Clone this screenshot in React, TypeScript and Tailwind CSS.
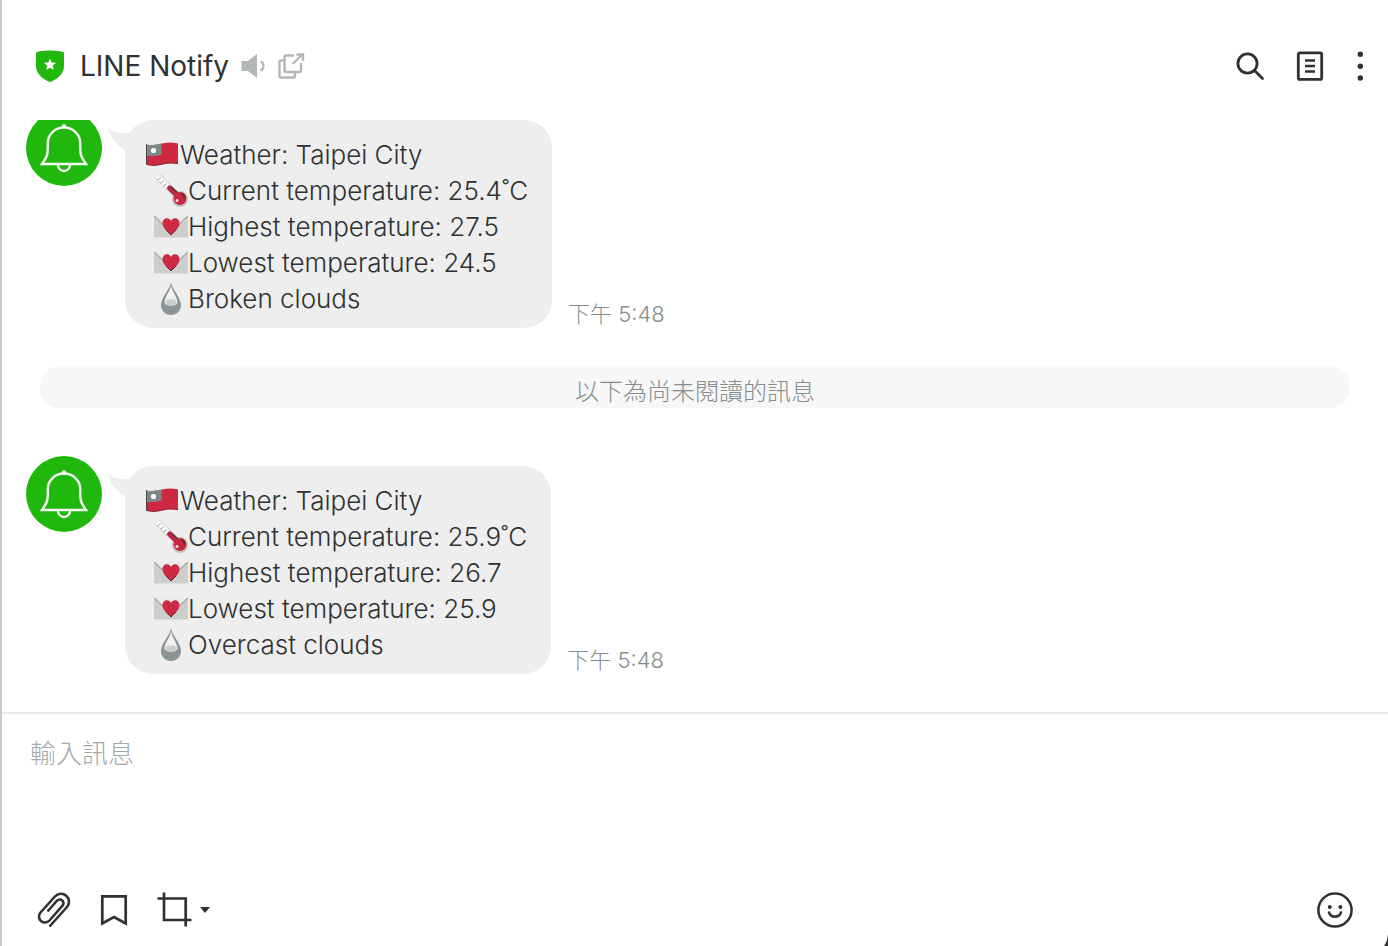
import React, { useState } from "react";

type Line = { icon: React.ReactNode; text: string };
type Message = { id: number; time: string; lines: Line[] };

function Flag() {
  return (
    <svg className="h-[34px] w-[34px] shrink-0" viewBox="0 0 34 34" role="img" aria-label="Taiwan">
      <path d="M0 6.500C6 7.500 10 7 16 5.500C22 4 27 4 32 5.500V26C27 25 22 25 16 26.500C10 28 5 28 0 26.500Z" fill="#cf2942" />
      <path d="M0 6.500C6 7.500 10 7 15.500 5.600V16.500C10 18 5 18.500 0 17.500Z" fill="#7f8888" />
      <circle cx="7.500" cy="12.500" r="2.600" fill="#fff" />
      <path d="M0.500 6.500V26.500" stroke="#4a4444" strokeWidth="1" />
      <path d="M1 26.600C8 28 13 27 18 25.700C23 24.500 27 24.800 32 25.700" stroke="#8b2436" strokeWidth="1" fill="none" />
    </svg>
  );
}

function Thermometer() {
  return (
    <svg className="h-[34px] w-[34px] shrink-0" viewBox="0 0 34 34" role="img" aria-label="Thermometer">
      <path d="M5 3.500L24 22" stroke="#d2d4d3" strokeWidth="7" strokeLinecap="round" />
      <path d="M4.500 3L16 14.500" stroke="#fbfbfb" strokeWidth="5" strokeLinecap="round" />
      <path d="M3 6.500l4-3M6 9.500l4-3M9 12.500l4-3M12 15.500l4-3" stroke="#a4a9a8" strokeWidth="1" />
      <circle cx="26" cy="25" r="8" fill="#c3c5c4" />
      <path d="M15.500 14L25 23.500" stroke="#b92740" strokeWidth="5" strokeLinecap="round" />
      <path d="M17 12.500L26 21" stroke="#4c3338" strokeWidth="1.200" />
      <circle cx="26" cy="24.500" r="6.500" fill="#c92840" />
      <path d="M27 19.500a5 5 0 0 1 3.500 5" stroke="#7c2635" strokeWidth="2" fill="none" />
      <circle cx="23" cy="26.500" r="1.500" fill="#f7dfe2" />
    </svg>
  );
}

function LoveLetter() {
  return (
    <svg className="h-[34px] w-[34px] shrink-0" viewBox="0 0 34 34" role="img" aria-label="Love letter">
      <path d="M0 6H34V27.500H0Z" fill="#cbcecb" />
      <path d="M1.500 6H32.500L17 20.500Z" fill="#e9eae9" />
      <path d="M0 6L12 17.500M34 6L22 17.500" stroke="#969c9a" strokeWidth="1" />
      <path d="M17 25C13 21 8.500 18 8.500 13C8.500 8 15 6.500 17 11C19 6.500 25.500 8 25.500 13C25.500 18 21 21 17 25Z" fill="#cc2a43" />
      <path d="M12 20L17 25L22 20" fill="none" stroke="#612b38" strokeWidth="1" />
    </svg>
  );
}

function Droplet() {
  return (
    <svg className="h-[34px] w-[34px] shrink-0" viewBox="0 0 34 34" role="img" aria-label="Droplet">
      <path d="M17 0.500C18.500 8 27 15.500 27 23C27 29 22.500 33 17 33C11.500 33 7 29 7 23C7 15.500 15.500 8 17 0.500Z" fill="#8c9596" />
      <path d="M17 3C18 10 23.500 15 23.500 20.500C23 22.500 21 23.500 17 23.500C13 23.500 11 22.500 10.500 20.500C10.500 15 16 10 17 3Z" fill="#f0f1f0" />
      <path d="M11.500 18.500C14 17 20 17 22.500 18.500C23 22 20.500 24 17 24C13.500 24 11 22 11.500 18.500Z" fill="#cbcecd" />
    </svg>
  );
}

const weather = (current: string, high: string, low: string, sky: string): Line[] => [
  { icon: <Flag />, text: "Weather: Taipei City" },
  { icon: <Thermometer />, text: `Current temperature: ${current}˚C` },
  { icon: <LoveLetter />, text: `Highest temperature: ${high}` },
  { icon: <LoveLetter />, text: `Lowest temperature: ${low}` },
  { icon: <Droplet />, text: sky },
];

const read: Message = { id: 1, time: "下午 5:48", lines: weather("25.4", "27.5", "24.5", "Broken clouds") };
const unread: Message = { id: 2, time: "下午 5:48", lines: weather("25.9", "26.7", "25.9", "Overcast clouds") };

function Avatar() {
  return (
    <svg className="h-[76px] w-[76px] shrink-0" viewBox="0 0 76 76" role="img" aria-label="LINE Notify">
      <circle cx="38" cy="38" r="38" fill="#21b80e" />
      <g fill="none" stroke="#f4f8f2" strokeWidth="2.400">
        <path d="M21.800 38V33a16.200 15.500 0 0 1 32.400 0V38C54.200 46 56 48 60 54H16C20 48 21.800 46 21.800 38Z" />
        <path d="M32 55a6 6 0 0 0 12 0" />
      </g>
      <circle cx="38" cy="16.500" r="2.200" fill="#f4f8f2" />
    </svg>
  );
}

function MessageRow({ message }: { message: Message }) {
  return (
    <li className="flex items-start pl-6">
      <Avatar />
      <div className="relative mt-[10px] ml-[23px] rounded-[28px] bg-[#eeeeee] pt-[17px] pr-6 pb-[11px] pl-[21px]">
        <svg className="absolute top-[7px] left-[-17px] h-6 w-7" viewBox="0 0 28 24" aria-hidden="true">
          <path d="M0 0.500C5 6 13 7.500 24 5V23H17C8 18 2 10 0 0.500Z" fill="#eeeeee" />
        </svg>
        {message.lines.map((line, i) => (
          <p key={i} className={i === 0 ? "flex h-9 items-center" : "flex h-9 items-center pl-2"}>
            {line.icon}
            <span className="text-[26px] leading-9 font-[350] whitespace-nowrap text-[#2f3232]">{line.text}</span>
          </p>
        ))}
      </div>
      <time className="ml-4 self-end text-[22px] leading-7 font-light whitespace-nowrap text-[#858e8e]">{message.time}</time>
    </li>
  );
}

function Header() {
  return (
    <header className="flex h-[120px] shrink-0 items-center pt-3 pr-[18px] pl-[34px]">
      <svg className="h-8 w-7" viewBox="0 0 28 32" aria-hidden="true">
        <path d="M0 2.500C5 -0.300 23 -0.300 28 2.500V16C28 24 21 29.500 14 32C7 29.500 0 24 0 16Z" fill="#21b80e" />
        <path d="M14 8.500L15.700 12.400L20 12.800L16.800 15.700L17.700 19.900L14 17.700L10.300 19.900L11.200 15.700L8 12.800L12.300 12.400Z" fill="#fff" />
      </svg>
      <h1 className="ml-4 text-[28px] leading-9 font-normal whitespace-nowrap text-[#2f3232]">LINE Notify</h1>
      <button type="button" aria-label="Mute" className="ml-3">
        <svg className="block h-7 w-6" viewBox="0 0 24 28" fill="none">
          <path d="M0.500 9H7L16 2V26L7 19H0.500Z" fill="#b3b7b6" />
          <path d="M19.500 9.500C23.500 11 23.500 17 19.500 18.500" stroke="#b3b7b6" strokeWidth="2.200" />
        </svg>
      </button>
      <button type="button" aria-label="Open in new window" className="ml-3">
        <svg className="block h-7 w-7" viewBox="0 0 28 28" fill="none" stroke="#b3b7b6" strokeWidth="2.400">
          <path d="M17 3.500H9Q7.500 3.500 7.500 5V18.500Q7.500 20 9 20H22.500Q24 20 24 18.500V11" />
          <path d="M7.500 8.500H4Q2.500 8.500 2.500 10V24Q2.500 25.500 4 25.500H16.500Q18 25.500 18 24V20" />
          <path d="M15.500 12L25.500 2.500M19.500 2.500H26V9" />
        </svg>
      </button>
      <div className="ml-auto flex items-center gap-6">
        <button type="button" aria-label="Search" className="mr-1">
          <svg className="block h-8 w-8" viewBox="0 0 32 32" fill="none" stroke="#2f3232" strokeWidth="2.800">
            <circle cx="13.500" cy="13.500" r="9.600" />
            <path d="M20.500 20.500L28.500 28.500" strokeLinecap="round" />
          </svg>
        </button>
        <button type="button" aria-label="Notes">
          <svg className="block h-8 w-8" viewBox="0 0 32 32" fill="none" stroke="#2f3232">
            <rect x="4.300" y="2.800" width="23.400" height="26.600" rx="1.500" strokeWidth="2.800" />
            <path d="M11 10.500H21M11 16H21M11 21.500H21" strokeWidth="2.400" />
          </svg>
        </button>
        <button type="button" aria-label="More">
          <svg className="block h-8 w-5" viewBox="0 0 20 32" fill="#2f3232">
            <circle cx="10.300" cy="4.300" r="2.700" />
            <circle cx="10.300" cy="16.200" r="2.700" />
            <circle cx="10.300" cy="28" r="2.700" />
          </svg>
        </button>
      </div>
    </header>
  );
}

function Composer() {
  const [text, setText] = useState("");
  return (
    <form className="flex h-[234px] shrink-0 flex-col border-t-2 border-[#e9e9e9]" onSubmit={(e) => e.preventDefault()}>
      <textarea
        aria-label="輸入訊息"
        placeholder="輸入訊息"
        value={text}
        onChange={(e) => setText(e.target.value)}
        className="w-full flex-1 resize-none px-7 pt-[22px] text-[26px] leading-9 font-light text-[#2f3232] outline-none placeholder:text-[#a4aaa9]"
      />
      <div className="flex h-[72px] shrink-0 items-center pr-[35px] pl-[34px]">
        <button type="button" aria-label="Attach file">
          <svg className="block h-9 w-9" viewBox="0 0 36 36" fill="none" stroke="#2f3232" strokeWidth="2.600">
            <path d="M13.500 34.500L31 15A7.800 7.800 0 0 0 19 4.500L4.500 20.500A6 6 0 0 0 13.500 28.500L26.500 13.700A3.700 3.700 0 0 0 21 8.700L11.500 19.500" />
          </svg>
        </button>
        <button type="button" aria-label="Save" className="ml-6">
          <svg className="block h-9 w-9" viewBox="0 0 36 36" fill="none" stroke="#2f3232" strokeWidth="2.700">
            <path d="M6.300 4.300H29.700V31.500L18 25L6.300 31.500Z" />
          </svg>
        </button>
        <button type="button" aria-label="Capture screen" className="ml-6 flex items-center gap-2">
          <svg className="block h-9 w-9" viewBox="0 0 36 36" fill="none" stroke="#2f3232" strokeWidth="2.700">
            <path d="M1.500 6.500H29.700V34.500M8 0.500V28H35.500" />
          </svg>
          <svg className="block h-[6px] w-[10px]" viewBox="0 0 10 6" fill="#2f3232">
            <path d="M0 0H10L5 6Z" />
          </svg>
        </button>
        <button type="button" aria-label="Emoji" className="ml-auto">
          <svg className="block h-9 w-9" viewBox="0 0 36 36" fill="none" stroke="#2f3232" strokeWidth="2.500">
            <circle cx="18" cy="18" r="16.600" />
            <path d="M12 20.500C14 26 22 26 24 20.500" strokeLinecap="round" />
            <circle cx="12.800" cy="15" r="2" fill="#2f3232" stroke="none" />
            <circle cx="23.400" cy="15" r="2" fill="#2f3232" stroke="none" />
          </svg>
        </button>
      </div>
    </form>
  );
}

export default function App() {
  return (
    <div className="relative flex h-screen flex-col overflow-hidden border-l-2 border-[#c9c9c9] bg-white font-['Inter','Noto_Sans_CJK_TC',sans-serif]">
      <Header />
      <main className="flex min-h-0 flex-1 flex-col justify-end overflow-hidden pb-[38px]">
        <ul>
          <MessageRow message={read} />
          <li className="mx-[38px] mt-[38px] mb-12 h-[42px] rounded-[20px] bg-[#f7f7f7] pt-[9px] text-center text-[24px] leading-[34px] font-light text-[#858e8e]">
            以下為尚未閱讀的訊息
          </li>
          <MessageRow message={unread} />
        </ul>
      </main>
      <Composer />
      <svg className="absolute right-0 bottom-0 h-3 w-1" viewBox="0 0 4 12" aria-hidden="true">
        <path d="M4 0Q3.500 7 0 12H4Z" fill="#2f3232" />
      </svg>
    </div>
  );
}
